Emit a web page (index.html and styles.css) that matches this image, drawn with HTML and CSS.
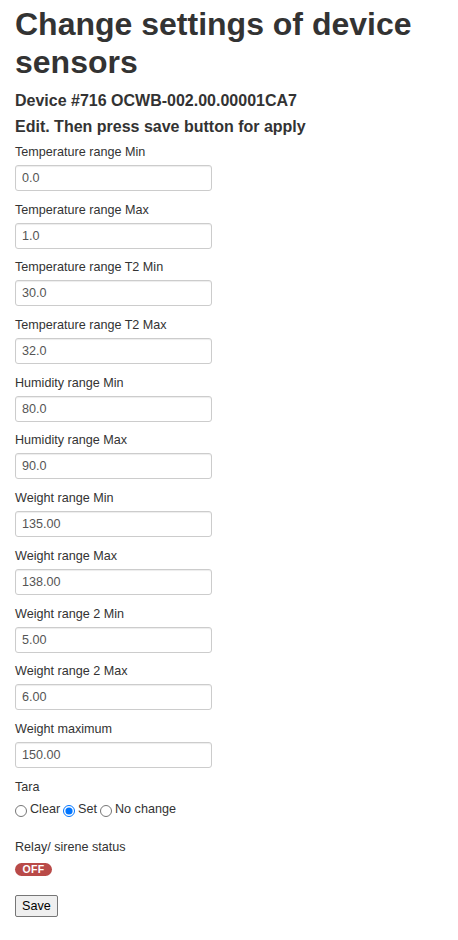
FILE: index.html
```html
<!DOCTYPE html>
<html lang="en">
<head>
<meta charset="utf-8">
<title>Change settings of device sensors</title>
<link rel="stylesheet" href="styles.css">
</head>
<body>
<div class="container">
  <h1 class="title">Change settings of device sensors</h1>
  <h4 class="subtitle">Device #716 OCWB-002.00.00001CA7</h4>
  <h4 class="subtitle second">Edit. Then press save button for apply</h4>
  <form class="settings">
    <div class="form-group"><label class="field-label">Temperature range Min</label><input class="field" type="text" value="0.0"></div>
    <div class="form-group"><label class="field-label">Temperature range Max</label><input class="field" type="text" value="1.0"></div>
    <div class="form-group"><label class="field-label">Temperature range T2 Min</label><input class="field" type="text" value="30.0"></div>
    <div class="form-group"><label class="field-label">Temperature range T2 Max</label><input class="field" type="text" value="32.0"></div>
    <div class="form-group"><label class="field-label">Humidity range Min</label><input class="field" type="text" value="80.0"></div>
    <div class="form-group"><label class="field-label">Humidity range Max</label><input class="field" type="text" value="90.0"></div>
    <div class="form-group"><label class="field-label">Weight range Min</label><input class="field" type="text" value="135.00"></div>
    <div class="form-group"><label class="field-label">Weight range Max</label><input class="field" type="text" value="138.00"></div>
    <div class="form-group"><label class="field-label">Weight range 2 Min</label><input class="field" type="text" value="5.00"></div>
    <div class="form-group"><label class="field-label">Weight range 2 Max</label><input class="field" type="text" value="6.00"></div>
    <div class="form-group"><label class="field-label">Weight maximum</label><input class="field" type="text" value="150.00"></div>
    <div class="tara">
      <div class="field-label tara-label">Tara</div>
      <div class="radios">
        <label class="radio"><input type="radio" name="tara" class="radio-input">Clear</label>
        <label class="radio"><input type="radio" name="tara" class="radio-input" checked>Set</label>
        <label class="radio"><input type="radio" name="tara" class="radio-input">No change</label>
      </div>
    </div>
    <div class="relay">
      <div class="field-label">Relay/ sirene status</div>
      <span class="badge">OFF</span>
    </div>
    <button type="button" class="save">Save</button>
  </form>
</div>
</body>
</html>
```
FILE: styles.css
```css
html, body {
  margin: 0;
  padding: 0;
  background: #fff;
}
body {
  font-family: "Liberation Sans", Arial, Helvetica, sans-serif;
  color: #333;
}
.container {
  padding: 0 15px;
}
.title {
  font-size: 32px;
  line-height: 38px;
  font-weight: bold;
  margin: 5px 0 0;
  color: #333;
}
.subtitle {
  font-size: 16px;
  line-height: 18px;
  font-weight: bold;
  margin: 11px 0 0;
  color: #333;
}
.subtitle.second {
  margin-top: 8px;
}
.settings {
  margin-top: 7px;
}
.form-group {
  margin-bottom: 9.7px;
}
.field-label {
  display: block;
  font-size: 12.6px;
  line-height: 18px;
  font-weight: normal;
  margin-bottom: 4px;
  color: #333;
}
.field {
  display: block;
  box-sizing: border-box;
  width: 197px;
  height: 26px;
  padding: 0 6px;
  border: 1px solid #ccc;
  border-radius: 3px;
  box-shadow: inset 0 1px 1px rgba(0,0,0,0.075);
  font-family: "Liberation Sans", Arial, sans-serif;
  font-size: 12.6px;
  color: #555;
  background: #fff;
  margin: 0;
}
.tara-label {
  margin-bottom: 4px;
}
.radios {
  display: flex;
  align-items: baseline;
  gap: 3px;
  font-size: 12.6px;
  line-height: 18px;
}
.radio {
  display: inline-flex;
  align-items: baseline;
}
.radio-input {
  width: 12px;
  height: 12px;
  margin: 0 3px 0 0;
  position: relative;
  top: 4px;
}
.relay {
  margin-top: 20px;
}
.relay .field-label {
  margin-bottom: 7px;
}
.badge {
  display: inline-block;
  width: 37px;
  height: 13px;
  line-height: 13px;
  border-radius: 7px;
  background: #b94a48;
  color: #fff;
  font-size: 10.5px;
  font-weight: bold;
  text-align: center;
  letter-spacing: 0.3px;
  vertical-align: top;
}
.save {
  display: block;
  margin-top: 14px;
  height: 22px;
  padding: 0 6px;
  font-family: "Liberation Sans", Arial, sans-serif;
  font-size: 12.6px;
  color: #000;
  background: #efefef;
  border: 1px solid #767676;
  border-radius: 2px;
}
```
